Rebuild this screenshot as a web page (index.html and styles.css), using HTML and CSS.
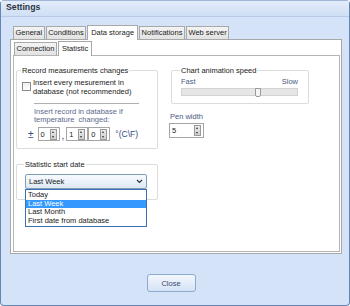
FILE: index.html
```html
<!DOCTYPE html>
<html lang="en">
<head>
  <meta charset="UTF-8" />
  <title>Settings</title>
  <link rel="stylesheet" href="styles.css">
</head>
<body>
  <div class="window">
    <div class="titlebar">Settings</div>
    <div class="main">
      <div class="tabs">
        <div class="tab">General</div>
        <div class="tab">Conditions</div>
        <div class="tab active">Data storage</div>
        <div class="tab">Notifications</div>
        <div class="tab">Web server</div>
      </div>
      <div class="pane">
        <div class="tabs inner">
          <div class="tab">Connection</div>
          <div class="tab active">Statistic</div>
        </div>
        <div class="inner-pane">
          <div class="col-left">
            <fieldset class="group record">
              <legend>Record measurements changes</legend>
              <label class="check">
                <span class="box"></span>
                <span>Insert every mesurement in<br>database (not recommended)</span>
              </label>
              <div class="sep"></div>
              <div class="hint">Insert record in database if<br>temperature&nbsp; changed:</div>
              <div class="spin-row">
                <span class="pm">±</span>
                <div class="spin"><span>0</span><i class="arrows"></i></div>
                <span class="comma">,</span>
                <div class="spin"><span>1</span><i class="arrows"></i></div>
                <div class="spin"><span>0</span><i class="arrows"></i></div>
                <span class="unit">°(C\F)</span>
              </div>
            </fieldset>
            <fieldset class="group start">
              <legend>Statistic start date</legend>
              <div class="combo">
                <span>Last Week</span>
                <svg width="7" height="5" viewBox="0 0 7 5"><path d="M1 1 L3.5 3.5 L6 1" fill="none" stroke="#333" stroke-width="1.2"/></svg>
                <ul class="dropdown">
                  <li>Today</li>
                  <li class="selected">Last Week</li>
                  <li>Last Month</li>
                  <li>First date from database</li>
                </ul>
              </div>
            </fieldset>
          </div>
          <div class="col-right">
            <fieldset class="group speed">
              <legend>Chart animation speed</legend>
              <div class="speed-labels"><span>Fast</span><span>Slow</span></div>
              <div class="track"><span class="thumb"></span></div>
            </fieldset>
            <div class="pen-label">Pen width</div>
            <div class="spin pen"><span>5</span><i class="arrows"></i></div>
          </div>
        </div>
      </div>
      <div class="footer">
        <button class="close-btn">Close</button>
      </div>
    </div>
  </div>
</body>
</html>
```

FILE: styles.css
```css
body {
  margin: 0;
  font-family: 'Liberation Sans', Arial, sans-serif;
  font-size: 7.5px;
  color: #222;
  background: #ffffff;
}

.window {
  width: 350px;
  height: 306px;
  box-sizing: border-box;
  background-color: #d4e3f8;
  border: 1px solid #6585b5;
  border-top-color: #9fb6d8;
  border-radius: 4px;
}

.titlebar {
  height: 15px;
  line-height: 13px;
  padding-left: 5px;
  font-weight: bold;
  font-size: 8.7px;
  color: #2a3340;
  background: linear-gradient(#e3ecf9, #cfdff4);
  border-bottom: 1px solid #b8cbe6;
}

.main {
  padding: 7px 7px 0 9px;
}

.tabs {
  display: flex;
  align-items: flex-end;
  padding-left: 3px;
  height: 15px;
}

.tab {
  height: 12px;
  line-height: 12px;
  padding: 0 1.5px;
  margin-right: 1px;
  background: linear-gradient(#f4f4f4, #e2e2e2);
  border: 1px solid #a8a8a8;
  border-bottom: none;
  color: #222;
  white-space: nowrap;
}

.tab.active {
  height: 14px;
  line-height: 13px;
  padding: 0 3px;
  background: #ffffff;
  position: relative;
  top: 1px;
  z-index: 1;
}

.pane {
  height: 215px;
  width: 332px;
  box-sizing: border-box;
  background: #ffffff;
  border: 1px solid #a8a8a8;
  padding: 1px 1px 0 2px;
}

.tabs.inner {
  padding-left: 1px;
  height: 14px;
}

.inner-pane {
  height: 197px;
  box-sizing: border-box;
  border: 1px solid #b4b4b4;
  display: flex;
  gap: 13px;
  padding: 10px 0 0 2px;
}

.col-left {
  width: 142px;
  display: flex;
  flex-direction: column;
  gap: 11px;
}

.col-right {
  width: 138px;
}

.group {
  box-sizing: border-box;
  margin: 0;
  padding: 0 0 0 5px;
  border: 1px solid #dcdcdc;
  border-radius: 2px;
}

.group legend {
  padding: 0 1px;
  margin-left: -1px;
  color: #222;
  line-height: 9px;
}

.record {
  height: 83px;
}

.check {
  display: flex;
  align-items: flex-start;
  gap: 2px;
  line-height: 9px;
  margin-top: 3px;
}

.check .box {
  width: 7px;
  height: 7px;
  margin-top: 4px;
  border: 1px solid #8a8a8a;
  background: linear-gradient(#f0f0f0, #ffffff);
}

.sep {
  margin: 7px 0 0 12px;
  width: 105px;
  border-top: 1px solid #b0b0b0;
}

.hint {
  margin: 4px 0 0 12px;
  line-height: 8px;
  color: #5a6a8e;
}

.spin-row {
  display: flex;
  align-items: center;
  margin-top: 3px;
  padding-left: 6px;
}

.pm {
  font-size: 10px;
  color: #334a80;
  margin-right: 4px;
}

.spin {
  position: relative;
  flex-shrink: 0;
  display: flex;
  align-items: center;
  width: 18px;
  height: 12px;
  border: 1px solid #a6a6a6;
  background: #ffffff;
  padding-left: 2px;
  box-sizing: content-box;
}

.spin span {
  flex: 1;
}

.arrows {
  width: 5px;
  height: 9px;
  margin-right: 2px;
  border: 1px solid #9a9a9a;
  background: linear-gradient(#eaeaea, #cfcfcf);
  position: relative;
}

.arrows::before,
.arrows::after {
  content: "";
  position: absolute;
  left: 1px;
  border-left: 1.5px solid transparent;
  border-right: 1.5px solid transparent;
}

.arrows::before {
  top: 1px;
  border-bottom: 2px solid #333;
}

.arrows::after {
  bottom: 1px;
  border-top: 2px solid #333;
}

.comma {
  font-size: 10px;
  color: #334a80;
  align-self: flex-end;
  margin: 0 2px 0 2px;
  line-height: 10px;
}

.unit {
  margin-left: 5px;
  font-size: 8.5px;
  color: #334a80;
}

.start {
  height: 40px;
  padding-left: 8px;
}

.combo {
  position: relative;
  width: 114px;
  height: 13px;
  border: 1px solid #7f9db9;
  border-radius: 2px;
  background: linear-gradient(#f8fbff, #dde8f6);
  display: flex;
  align-items: center;
  justify-content: space-between;
  padding: 0 3px;
  margin-top: 5px;
  box-sizing: content-box;
}

.dropdown {
  position: absolute;
  left: -1px;
  top: 14px;
  width: 120px;
  margin: 0;
  padding: 1px 0;
  list-style: none;
  background: #ffffff;
  border: 1px solid #3d6fb4;
  z-index: 2;
}

.dropdown li {
  height: 8.5px;
  line-height: 8.5px;
  padding-left: 2px;
}

.dropdown li.selected {
  background: #3399ff;
  color: #ffffff;
}

.speed {
  height: 38px;
  padding: 0 10px 0 9px;
}

.speed-labels {
  display: flex;
  justify-content: space-between;
  color: #4a5a82;
  line-height: 9px;
  margin-top: 2px;
}

.track {
  position: relative;
  height: 6px;
  margin-top: 2px;
  background: #e6e6e6;
  border: 1px solid #d2d2d2;
}

.thumb {
  position: absolute;
  left: 73px;
  top: -1px;
  width: 4px;
  height: 7px;
  border: 1px solid #9a9a9a;
  border-radius: 0 0 2px 2px;
  background: #f4f4f4;
}

.pen-label {
  margin: 8px 0 0 -1px;
  color: #4a5a82;
  line-height: 9px;
}

.spin.pen {
  margin: 2px 0 0 -2px;
  width: 31px;
  height: 13px;
}

.footer {
  display: flex;
  justify-content: center;
  padding-top: 20px;
  padding-right: 10px;
}

.close-btn {
  width: 49px;
  height: 18px;
  font-family: 'Liberation Sans', Arial, sans-serif;
  font-size: 7.5px;
  color: #3a4a6a;
  border: 1px solid #8fa9d0;
  border-radius: 3px;
  background: linear-gradient(#f3f7fd, #d5e3f6);
  padding: 0;
}
```
